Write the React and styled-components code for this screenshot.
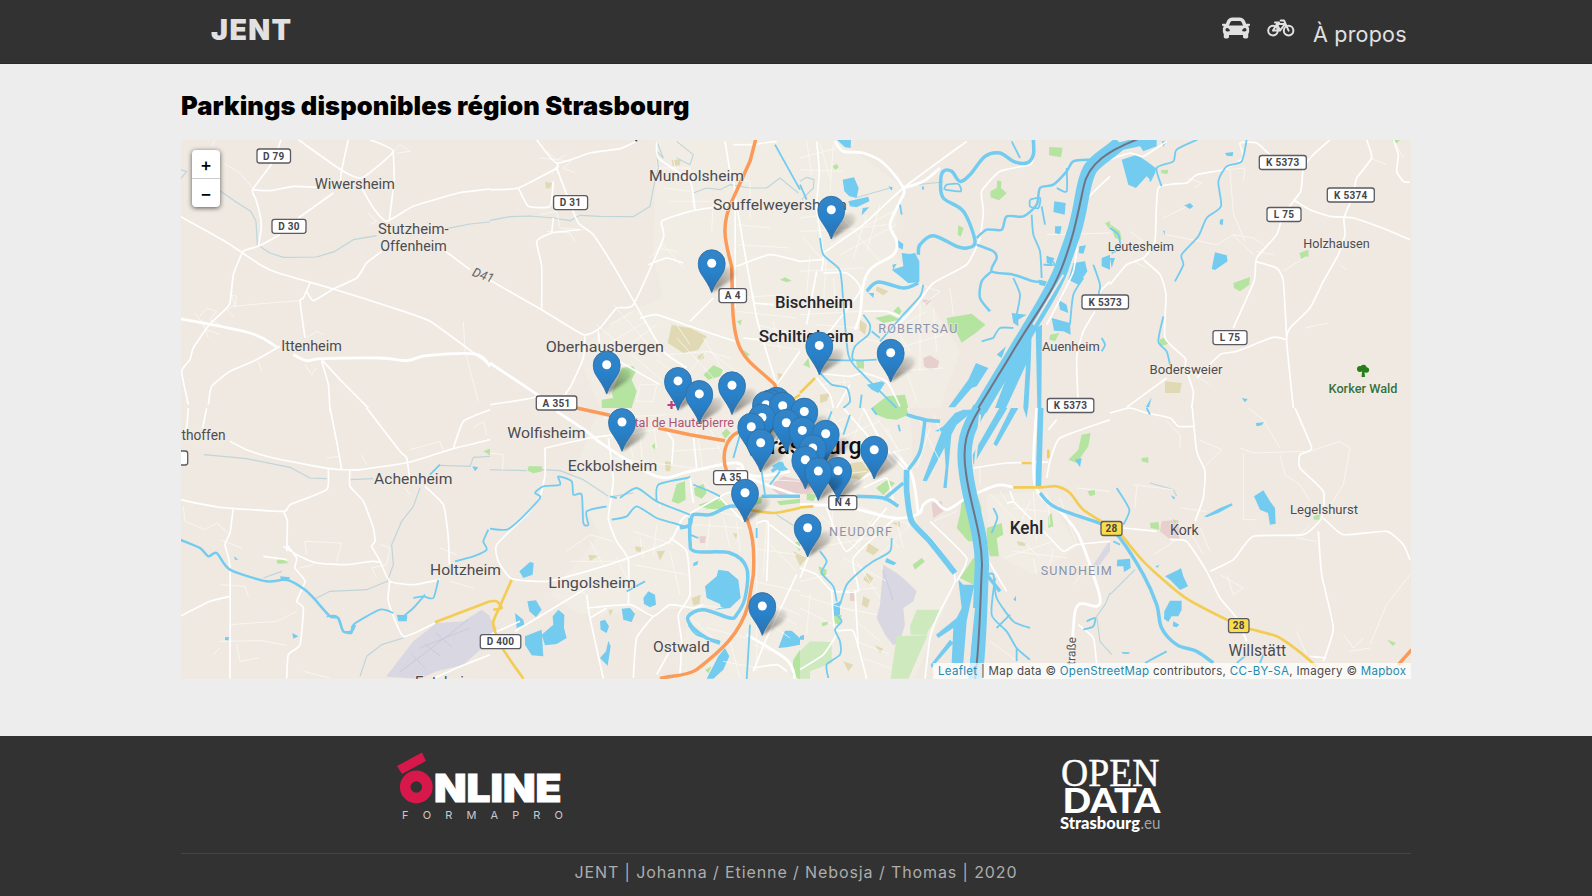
import React from "react";
import styled, { createGlobalStyle } from "styled-components";
import { FaCar } from "react-icons/fa";

const GlobalStyle = createGlobalStyle`
  * { box-sizing: border-box; }
  html, body { margin: 0; padding: 0; }
  body {
    background: #ededed;
    font-family: Inter, "Liberation Sans", sans-serif;
    color: #000;
    overflow: hidden;
  }
  a { color: inherit; text-decoration: none; }
`;

const Page = styled.div`
  width: 100%;
  height: 896px;
  display: flex;
  flex-direction: column;
`;

const Navbar = styled.header`
  height: 64px;
  flex: none;
  background: #323232;
  border-bottom: 1px solid #292929;
  color: #e1e1e1;
  padding: 0 185px 0 211px;
  display: flex;
  justify-content: space-between;
`;

const Brand = styled.a`
  font-size: 28.5px;
  line-height: 34px;
  margin-top: 13px;
  font-weight: 900;
  letter-spacing: 1.4px;
`;

const Nav = styled.nav`
  display: flex;
  align-items: flex-start;
`;

const NavIcon = styled.a`
  display: block;
  height: 28px;
  margin-top: ${(p) => p.$top}px;
  margin-right: ${(p) => p.$gap}px;
  svg { display: block; }
`;

const NavText = styled.a`
  font-size: 21.5px;
  line-height: 26px;
  letter-spacing: 0.2px;
  margin-top: 21px;
  width: 94px;
  white-space: nowrap;
`;

const Main = styled.main`
  width: 1230px;
  margin: 0 auto;
  flex: 1;
`;

const Title = styled.h1`
  margin: 26px 0 18px;
  height: 32px;
  font-size: 25.5px;
  line-height: 32px;
  font-weight: 900;
  letter-spacing: 0.1px;
  white-space: nowrap;
`;

const MapBox = styled.section`
  position: relative;
  height: 539px;
  overflow: hidden;
  background: #efe9e1;
`;

const MapSvg = styled.svg`
  display: block;
  width: 1230px;
  height: 539px;
`;

const ZoomControl = styled.div`
  position: absolute;
  left: 11px;
  top: 10px;
  width: 28px;
  border-radius: 4px;
  background: #fff;
  box-shadow: 0 1px 5px rgba(0, 0, 0, 0.65);
`;

const ZoomButton = styled.button`
  display: flex;
  align-items: center;
  justify-content: center;
  width: 28px;
  height: 28px;
  padding: 1px 0 0;
  border: 0;
  background: none;
  font: 500 18px/28px Inter, sans-serif;
  color: #000;
  & + & { border-top: 1px solid #ccc; height: 29px; }
`;

const Attribution = styled.div`
  position: absolute;
  right: 0;
  bottom: 0;
  width: 478px;
  height: 16px;
  padding-left: 5px;
  background: rgba(255, 255, 255, 0.7);
  font-size: 11.5px;
  line-height: 16px;
  letter-spacing: 0.3px;
  white-space: nowrap;
  color: #4a4a4a;
  a { color: #2489b2; }
`;

const Footer = styled.footer`
  height: 160px;
  flex: none;
  background: #323232;
`;

const FooterInner = styled.div`
  width: 1230px;
  margin: 0 auto;
`;

const Partners = styled.div`
  height: 118px;
  display: grid;
  grid-template-columns: 1fr 1fr;
  justify-items: center;
  border-bottom: 1px solid #454545;
`;

const PartnerLogo = styled.svg`
  display: block;
  margin-top: ${(p) => p.$top}px;
  margin-left: ${(p) => p.$shift}px;
  overflow: visible;
`;

const Credits = styled.p`
  margin: 8px 0 0;
  text-align: center;
  font-size: 16px;
  line-height: 20px;
  letter-spacing: 0.9px;
  color: #adadad;
`;

/* Map sheets: each one holds geometry in third-of-a-pixel units from its own origin. */
const SHEETS = {
  A: [180, 138], B: [490, 138], C: [800, 138], D: [1110, 138],
  E: [180, 408], F: [490, 408], G: [800, 408], H: [1110, 408],
};

const LAYERS = [
  { fill: "#f1ede4", paths: [
    ["B", "M500 0H930V810H330L260 640L420 520L520 480L490 350Z"],
    ["C", "M0 0H110L300 140L280 340L360 440L480 640L420 810H0Z"],
    ["F", "M330 0H930V820H560L600 600L270 620L180 560L330 380L240 220Z"],
    ["G", "M0 0H330L350 340L470 520L340 820H0Z"],
    ["G", "M560 260L740 250L830 420L700 500L570 430Z"],
  ]},
  { fill: "#d9d8e2", paths: [
    ["E", "M618 806L700 700L770 645L850 640L905 605L930 625V700L850 770L770 790L720 812Z"],
    ["F", "M0 630L20 660L0 700Z"],
    ["G", "M250 470L290 495L320 520L350 550L340 580L310 600L315 650L300 700L280 712L255 680L230 630L240 590Z"],
    ["G", "M880 470L930 395V430L895 475Z"],
  ]},
  { fill: "#e0d9b4", paths: [
    ["B", "M545 560L600 570L650 595L625 635L580 645L533 615Z"],
    ["B", "M545 65L572 65L570 82L548 84ZM165 132L187 135L180 150L168 152ZM622 655L640 645L642 660L628 668ZM862 705L878 708L868 738Z"],
    ["C", "M230 445L265 460L250 472L228 458ZM180 545L200 560L195 590L178 575ZM60 770L90 765L80 790L60 795Z"],
    ["F", "M295 440L325 443L300 460ZM435 415L460 418L450 432L438 430ZM525 160L545 162L540 190L527 190ZM500 430L525 428L510 458ZM605 570L632 560L628 590L610 592ZM728 375L742 378L738 392ZM355 605L370 605L360 625ZM910 430L930 440V475Z"],
    ["G", "M130 170L190 160L210 185L180 215L130 205ZM205 405L238 425L220 442L198 430ZM200 495L220 510L210 528L190 515ZM190 565L210 575L202 600L185 590ZM130 760L160 770L145 790ZM225 712L250 722L240 735ZM650 400L678 404L675 415L655 412ZM0 440L20 450L0 475ZM275 345L300 340L300 358Z"],
    ["D", "M165 730L215 735L210 765L165 765Z"],
  ]},
  { fill: "#e7cfcd", paths: [
    ["C", "M370 660L390 652L418 670L412 690L390 695L372 685ZM365 485L395 485L380 502Z"],
    ["F", "M850 225L880 205L930 215V255L870 262L848 245ZM628 385L648 385L645 405L630 405Z"],
    ["G", "M0 210L60 220L60 255L0 258ZM395 285L425 280L430 310L400 330ZM150 550L168 550L165 580L150 578Z"],
    ["H", "M155 340L205 335L208 392L175 390L150 370Z"],
  ]},
  { fill: "#b5e3a0", paths: [
    ["B", "M395 690L430 685L438 700L425 725L440 760L425 810H335V785L370 780L365 765ZM640 710L670 682L700 695L690 715L655 725ZM870 425L885 418L905 428L890 433ZM740 550L755 545L752 562ZM760 635L780 650L770 655Z"],
    ["C", "M748 27L788 29L783 58L747 52ZM571 160L590 150L592 127L604 130L603 150L620 165L597 187L572 178ZM475 262L491 270L482 296L473 290ZM98 85L110 78L116 88L106 96ZM440 540L515 527L556 560L530 583L485 614L470 585L448 580ZM225 540L270 530L300 545L250 555ZM280 520L295 505L305 520L298 530ZM168 668L192 665L192 692L172 690ZM215 810L260 775L315 770L325 810ZM750 590L778 585L765 610L748 605ZM915 255L930 250V275ZM10 680L25 660L30 690Z"],
    ["D", "M152 97L175 95L172 108L155 106ZM370 435L420 417L418 440L390 460L372 450ZM568 345L595 335L596 355L574 364ZM148 605L165 598L174 618L152 625ZM0 258L30 280L35 305L15 300ZM845 5L870 5L862 15L850 13Z"],
    ["E", "M288 460L305 450L326 465L295 468ZM910 130L930 122V142Z"],
    ["F", "M115 175L155 175L157 190L130 196L113 188ZM545 280L560 228L585 220L587 275L565 287ZM612 240L640 228L650 255L635 272L615 262ZM625 290L690 270L720 300L650 305ZM695 75L710 62L722 75L705 92ZM760 280L815 265V285L770 300ZM860 280L930 272V285L870 292ZM910 405L930 400V430ZM645 785L665 775L655 796ZM910 755L930 725V815L905 800ZM485 115L495 105L495 125Z"],
    ["G", "M215 0L320 0L325 20L290 35L260 32L225 18ZM228 240L262 215L285 225L250 262ZM20 255L50 260L40 280L20 275ZM485 280L535 270L545 300L540 400L505 400L470 360L480 320ZM560 360L605 345L610 380L590 390L597 445L570 445L560 400ZM480 510L520 450L545 455V500L520 530ZM338 470L365 450L375 460L345 485ZM845 80L872 75L865 115L830 165L805 155L835 125ZM862 250L885 245L885 260L870 265ZM100 625L125 620L120 650L102 645ZM65 645L85 640L82 650L67 655ZM55 475L80 485L78 505L62 500ZM745 325L755 315L760 355L745 360Z"],
    ["H", "M120 345L145 342L148 365L122 360ZM95 150L115 148L115 165L95 160ZM832 695L858 705L848 714ZM610 325L630 318L628 335L612 335ZM187 333L200 338L195 345Z"],
  ]},
  { fill: "#cee9bd", paths: [
    ["G", "M0 730L30 700L95 702V765L30 790V812H0ZM350 605L425 605L385 668L380 680L332 680L330 655ZM290 685L383 682L325 812H272Z"],
  ]},
  { fill: "#73ccf0", paths: [
    ["C", "M110 5L153 5L152 30L135 28ZM128 125L162 118L176 150L170 180L148 175L133 160ZM145 190L205 176L208 190L170 208L150 205ZM305 345L330 348L345 345L358 370V432L325 436L300 415L275 395L310 385ZM292 305L310 318L308 335L290 325ZM763 190L797 195L794 230L760 222ZM765 265L785 265L780 290L765 285ZM838 325L858 322L850 347L836 345ZM820 375L855 370L862 400L835 440L805 425ZM528 675L565 690L530 745L515 750L465 808H445L505 725ZM775 485L800 500L805 525L780 515ZM755 540L810 555L812 590L790 580L762 578ZM635 525L680 530L655 545L655 565L640 555ZM740 355L763 360L755 380L740 375ZM716 425L740 430L735 445L718 440ZM905 360L930 350V395L905 385ZM265 145L278 148L275 158ZM188 210L208 208L185 232ZM205 465L222 465L220 480ZM200 740L245 730L255 735L235 765L215 755ZM590 650L618 625L605 660ZM277 380L290 377L280 395Z"],
    ["C", "M665 600L695 580L692 680L685 810H670L678 680L618 810H585ZM640 640L650 640L555 810H530ZM707 570L726 560L724 810H712Z"],
    ["D", "M0 20L60 5H140V25L100 40L90 25L40 35L0 55ZM35 65L80 50L110 70L140 92L120 125L110 115L78 150L55 140ZM305 393L315 343L350 352L353 370L315 396ZM222 203L240 195L250 205L240 213ZM330 245L340 243L338 262L329 258ZM345 45L370 42L368 55L350 53ZM395 780L413 783L405 793ZM0 360L15 360L5 390ZM155 10L170 10L160 26ZM160 278L165 278L163 292ZM107 808L125 778L117 808Z"],
    ["E", "M300 505L330 508L325 520L305 518ZM650 620L682 622L680 640L655 640ZM877 175L895 178L885 190ZM337 675L355 685L340 692ZM135 688L147 687L145 698L135 696ZM162 445L175 455L165 455Z"],
    ["F", "M88 490L120 462L131 465L128 500L100 510ZM75 615L100 635L103 650L80 660ZM112 580L138 577L155 605L138 628L118 610ZM105 685L155 665L160 745L125 742L105 710ZM155 680L190 650L188 625L205 605L223 620L222 660L230 690L200 708L165 712ZM395 602L420 600L435 618L425 642L400 635ZM460 570L475 550L495 560L498 590L480 598L462 588ZM330 640L345 635L357 655L350 675L332 665ZM355 698L362 715L353 773L330 750L348 730ZM645 535L680 505L685 485L715 490L745 515L752 570L720 600L675 605L693 598L690 588L650 570ZM610 465L625 458L622 470L610 475ZM865 720L885 668L905 668L930 690V710L890 718ZM685 745L705 720L718 745L700 785L670 812H650ZM845 175L870 160L895 185L870 190Z"],
    ["G", "M430 55L465 15L490 5H525L470 50L380 220L368 218L425 70L405 70ZM432 95L455 70L440 240H430L437 175ZM598 0H622L520 170L518 140ZM633 0H655L590 115L580 108ZM670 0H684L680 30ZM475 515L490 530L523 530L500 640L490 765H455L460 660L415 690L408 680L470 630L485 600ZM460 705L395 780L392 770L450 695ZM260 450L290 465L280 472L255 462ZM98 590L120 580L120 620L100 625ZM0 685L12 680V695H0ZM825 155L845 150L840 178ZM640 575L648 563L648 580Z"],
    ["H", "M432 265L460 247L480 280L495 300L497 347L480 350L474 315L450 305ZM283 325L330 300L365 286L368 292L325 315L290 328ZM165 505L205 485L213 480L220 505L234 535L210 546L180 515ZM163 610L180 578L215 578L215 605L205 625L185 625L175 642L162 632ZM190 640L208 650L200 658L188 655ZM22 455L60 452L62 480L42 492L40 475L20 475ZM437 45L462 43L455 52L440 55ZM182 262L195 268L192 275ZM35 732L60 733L55 738L38 737ZM137 475L148 470L142 480Z"],
  ]},
];

const LINES = [
  { c: "#bed5da", w: 3.5, paths: [
    ["A", "M0 95L20 100L0 125M122 160L165 190L212 220L228 250L232 320L270 345L310 358L410 357L465 340L520 305L590 293M800 272L870 258L930 252"],
    ["B", "M0 247L60 236L120 234L190 240L240 248L270 232L330 235L430 236L480 205L490 150L505 90L500 40L520 60L500 10M610 165L650 150L690 155L720 140L780 150L830 150L870 120L925 165M560 10L610 50L600 80L560 60"],
    ["C", "M0 130L20 118L42 125L40 150L5 185M165 180L270 150M350 140L430 132"],
    ["E", "M72 140L200 152L330 178L390 210L440 212M510 215L580 212M720 240L700 295L665 340L635 410L640 470L622 520L560 545L450 550L400 575M780 172L870 175L880 148L930 145M540 805L560 745L605 710L670 690M250 510L305 490"],
    ["F", "M0 185L110 188M155 185L210 188L280 215L355 265M370 265L430 255M860 320L930 365"],
    ["G", "M930 555L915 590L890 625L900 700L935 740"],
    ["H", "M75 485L0 560M120 225L190 245L200 265"],
  ]},
  { c: "#fbf9f6", w: 3, o: 0.75, paths: [
    ["A", "M95 25L105 5M130 75L180 105L218 150M150 460L165 500L140 515L165 540M160 505L235 498L355 488M60 535L80 510L110 520L90 545L120 560M150 470L170 475L165 510M65 545L85 600M380 600L410 580L430 590M375 680L395 710L410 690M640 40L660 20L690 40L650 45M850 550L855 640L895 790M565 225L590 250L570 260M235 670L245 700M45 525L80 575L120 590"],
    ["B", "M150 60L245 70L220 90L255 105M170 40L200 65L230 50M185 110L205 75M150 230L200 220L210 270L280 275M170 280L240 285L255 310M480 360L520 320L580 390M500 330L560 340M505 90L600 90L610 210M540 190L670 190L665 280M720 120L780 130L780 240M560 120L550 60M520 150L600 160M740 260L840 270M745 320L900 330M740 480L880 470M790 460L800 550M740 520L920 540M830 620L930 635M850 550L870 640M320 560L520 730M370 500L510 660M360 560L430 520M350 620L470 550M390 640L500 560M530 650L660 640L750 710M600 700L650 640L720 660M560 600L670 720M450 740L500 740L490 790L440 790ZM350 690L420 680M500 665L570 720M640 600L720 730M560 560L600 620M800 560L920 590M770 670L830 720M810 620L860 600"],
    ["C", "M0 60L110 30M0 95L130 100M20 10L35 110M60 15L90 120M100 20L90 160M0 240L80 230M0 280L140 275M10 300L80 380M100 280L260 260M130 240L240 370M90 320L280 220M120 350L290 260M160 360L200 230M200 340L240 200M0 400L190 390M30 350L20 470M80 350L70 500M0 530L180 520M100 420L110 520M50 560L180 570M180 600L280 620M240 600L380 520M260 640L430 590M280 560L330 640M360 500L360 700M400 510L410 640M270 700L430 690M130 720L150 800M60 740L150 730M320 700L350 790M360 440L420 460L370 500M740 290L930 285M450 450L460 530"],
    ["D", "M235 120L275 135L255 150M360 95L370 225L405 310M160 240L230 205M170 290L320 320L370 290L430 300L460 320M370 290L430 350M440 340L490 350M585 570L655 555M590 355L520 400M70 370L110 390M60 280L100 310L70 320M780 60L830 80M690 380L710 395M850 5L880 60M220 690L300 740M350 95L405 90L400 130"],
    ["E", "M10 295L15 340L75 365L110 345L150 380M120 395L185 420M380 440L375 400L485 405L470 460M120 530L195 535L205 565M150 650L290 640L350 610M120 700L245 698L320 712M170 710L180 760L235 750M100 740L120 720M360 480L400 470M370 790L450 810M600 410L630 420L620 470L575 480L590 510M545 140L560 170M440 150L480 145M880 60L910 40L920 80M780 420L830 440M810 520L880 540M690 125L780 100L790 130M675 240L690 260"],
    ["F", "M0 135L40 140L38 185M340 30L530 20M360 90L520 60M410 90L430 10M490 40L500 120M450 80L460 180M540 130L690 120M620 70L640 190M660 60L700 150M370 150L690 190M500 230L510 300M430 150L410 60M640 220L690 280M640 300L760 330M610 350L760 360M660 330L650 420M700 330L720 420M740 340L750 430M230 430L300 380L370 400M240 460L420 460M300 400L340 470M380 450L420 530M430 370L550 410M450 390L460 450M500 350L490 440M540 430L570 560M430 470L590 500M200 520L290 560M620 590L700 600M590 620L680 700M650 660L770 690M720 700L750 810M800 320L800 790M830 340L820 500M780 420L920 440M830 400L920 490M790 520L930 550M800 590L920 650M830 640L900 690M850 590L930 620M790 710L880 740M700 760L800 780M850 20L930 140M860 120L930 170M750 210L930 220"],
    ["G", "M0 80L140 30M80 0L200 180M120 90L240 40M150 100L220 170M190 0L160 100M230 30L300 130M260 60L320 180M180 160L330 120M30 210L200 190M100 300L90 400M160 290L330 350M60 320L180 430M230 310L170 420M200 340L300 420M290 340L310 420M330 350L240 440M40 420L210 390M0 520L90 500M0 560L160 610M0 600L100 650M30 560L20 680M130 450L260 520M170 460L240 570M120 550L230 540M130 600L230 620M170 640L240 700M170 700L270 740M190 750L270 780M400 340L470 310M350 20L420 160M400 20L420 70M350 180L390 60M540 180L540 230M570 260L650 340M600 250L620 280M640 300L740 310M660 350L690 280M700 250L710 400M740 260L750 350M780 270L830 410M640 430L800 450M670 400L720 450M610 450L760 400M800 480L870 470L820 530M560 590L600 660M570 700L680 780M700 450L710 500M760 420L750 470M830 240L930 250"],
    ["H", "M70 230L190 245M80 235L75 300M265 95L335 125L280 180M390 120L430 135L600 130L690 100L720 120L700 230L650 310M400 135L400 335L440 335M510 140L525 200L570 230L600 280M415 0L460 35L510 120M170 40L210 80L210 120M240 370L280 440M270 360L300 430M210 300L290 310M330 500L400 540L370 560L350 500M600 350L560 390L620 400M780 710L830 590L900 500M700 680L730 720L760 690M720 730L780 720M560 670L590 740M130 440L200 395"],
  ]},
  { c: "#fff", w: 5, smooth: 0.5, paths: [
    ["A", "M303 5L280 70L218 155L228 185L240 230L244 270L235 325M218 155L270 158L340 145L415 148M355 5L485 97L545 120L640 40L570 5M505 5L485 97L480 140M640 40L642 130L628 245M545 150L580 210L620 250L700 205L835 165L870 160L930 153M460 165L355 240M300 290L235 325L190 340L160 410L148 500L88 560L40 630L30 665L5 700L25 800M0 235L135 310L240 380L295 405L460 453L640 510L750 550L885 648L930 680M390 435L370 480L360 490L375 600M380 460L400 488L460 453L530 420L560 375L605 340M790 335L870 395M85 800L95 745L150 700L220 670L300 625M425 670L445 740L450 820M425 665L490 735L565 810"],
    ["B", "M140 5L200 75L300 45L390 32L440 10M200 75L200 90L85 150L0 155M85 150L115 205L180 205L190 130M200 90L230 170L265 255L310 290L380 400L460 540L520 640L590 690M0 427L155 515L280 590L330 570L380 510L430 500L520 300L515 250L600 220L720 200M155 515L155 385L140 310L185 285L270 275M185 285L190 240M500 10L505 60L600 130L615 215M450 540L500 530L600 565L735 610M600 550L670 480M475 380L530 360L580 375M740 385L840 350L930 370M0 675L140 770L100 785L0 800M285 595L280 660L245 740L225 770M325 580L340 640L510 740M705 10L720 100L735 160L735 510M735 170L750 260L800 540L860 740M730 20L780 20L860 10M760 600L850 610M790 495L850 500M860 740L930 640"],
    ["C", "M50 10L58 100L50 210L70 350L65 400M0 370L65 365M70 345L190 260L310 150L500 10M700 60L690 80L600 100L545 160L550 220L540 300L500 380L400 435L350 500L310 545L285 565M190 520L260 520L310 540M20 560L50 400M40 640L180 460L140 405L70 405M885 520L850 580L830 660L835 810M880 480L930 430M930 115L850 200L820 400L740 560M50 705L150 715L190 705L260 730L300 805M50 720L90 770L100 810M150 740L110 810"],
    ["D", "M660 5L610 50L580 90L572 160L520 230L500 290L440 360L432 430L370 570M550 185L600 215L660 235L730 240L830 275L900 305M770 5L785 60L740 120L730 170L702 240L705 290L685 350L640 430L600 510L540 570L530 610L550 810M850 5L865 50L860 100L880 130L900 133M435 370L500 390L520 430L530 600M530 605L490 598L380 640L330 650L260 720M0 440L50 380L100 360L135 310L145 150L230 135L260 110L340 95L400 60L390 15L440 15L490 60M100 365L150 410L168 470L165 600L225 660L225 690M0 65L60 45L100 55L170 10M50 808L170 720M230 700L250 760L245 810"],
    ["E", "M80 0L68 60M25 0L20 60L10 70M150 100L200 125L280 150L450 182L540 185L690 162L820 122L930 95M820 122L850 40L930 5M450 0L470 100L485 185M445 185L440 245L330 290L310 310L120 298L0 275M510 185L510 235L550 280L580 360L585 400L575 415L600 460L575 460L500 470L410 465L350 440L310 415M310 310L322 340L320 430M560 0L660 130L680 150L690 220M735 235L790 290L805 390L808 470M320 410L350 450L345 480L375 520L350 580L370 600L360 710L325 740L320 812M160 300L150 375L135 410L150 480L150 812M0 625L90 580L150 565M600 460L630 520L700 530L780 515M630 520L625 580L670 685L765 645M250 445L320 455M760 812L830 780L930 740"],
    ["F", "M165 120L300 90L420 75M165 120L165 200L150 265L110 320L20 410L25 460L65 512L170 520L290 490L415 450L540 400L580 330L700 260L730 250M355 90L370 220L355 330L380 400L415 455L415 590M540 390L590 430L600 560L565 620L575 700L570 800M290 560L300 630L340 812M290 600L420 590L490 625L540 590L610 600L640 590M300 630L350 600M75 670L290 540M0 680L90 640M490 625L440 690L430 810M500 800L550 710M530 70L550 100L545 170M610 80L620 180M600 210L610 285M690 270L760 340M800 345L835 345L830 520M840 350L930 420M920 500L830 690L790 790M790 780L860 770L890 790"],
    ["G", "M0 510L60 360M80 300L140 430L260 300M0 480L50 500L95 548L175 548L160 450L280 335M95 548L105 665L160 670L200 812M165 548L175 720M0 785L70 740L110 680M335 340L400 400L450 470L465 520L415 620L390 690L375 812M390 340L500 450L470 520M630 250L640 280L620 285M520 180L620 165L745 162M740 210L750 160L780 90L930 35M745 65L770 35M640 280L750 390L790 430L830 410L930 400M835 650L880 690L890 770M560 450L620 550M190 0L250 110L320 190M130 0L280 170M280 280L260 210L190 240M220 190L160 230"],
    ["H", "M0 15L60 0L110 15L180 30L205 55L250 55M247 0L260 130L285 190L280 270L255 340M555 0L605 120L570 140L570 180L640 250L635 330L580 380L430 385L370 455L300 490M640 330L700 380L830 370L880 410L900 455M40 360L140 370M180 395L230 400L290 490L330 570L380 630L410 700M625 370L635 500L670 660L640 760M650 750L600 745"],
  ]},
  { c: "#fff", w: 8.5, smooth: 1, paths: [
    ["A", "M0 542L210 585L295 630M340 650L380 668L425 662L600 660L680 668L740 653L885 648L930 685"],
    ["B", "M0 675L150 775"],
    ["C", "M105 10L130 40L190 45L250 75L310 150L300 190L270 260L290 310L280 350L215 390L190 440L180 530L165 575M310 150L370 130L420 90"],
    ["F", "M200 10L290 70L340 110L500 205L600 190L740 165L780 210L930 265M770 680L890 755L915 812M740 180L800 205L900 190"],
    ["G", "M0 290L130 295L280 330L355 318L370 290L400 275L440 305L500 270L590 232L640 238M280 130L335 200L355 320M710 0L705 230L790 320L835 380L880 500L900 570L890 595L835 590L820 660L815 812"],
  ]},
  { c: "#73ccf0", w: 5.5, smooth: 0.7, paths: [
    ["B", "M855 20L930 155"],
    ["C", "M60 300L70 350L115 390L125 430L145 650L190 710L240 760L290 810M190 530L210 560L205 590L165 625L160 665L230 665M60 665L160 668M215 580L240 600M0 140L20 185M800 90L800 160L770 150M695 230L700 290L720 340L725 420M725 205L735 260M640 420L660 470L650 530M580 600L545 610M640 570L600 570L580 600M300 200L305 230M368 145L370 155M60 705L95 740L140 750L150 790L130 810M690 185L720 180L715 210L690 205L690 185M635 10L660 60M880 380L900 440L895 470M185 770L180 810M905 600L915 620L905 640M370 440L360 475L310 530L240 610M810 560L820 470L850 420M740 355L765 380L730 380M432 155L440 140L475 138L482 160L435 155"],
    ["D", "M262 5L200 35L190 70L140 90L155 145M135 100L120 130M410 5L395 70L350 85L325 130L333 205L290 240L265 295L215 350L220 380L195 430M160 535L145 610L170 640L180 680M0 270L25 290L30 330L5 345"],
    ["E", "M825 460L880 445L920 425L910 400L925 365M775 515L760 570L730 565L700 570M735 560L700 600L670 625M640 615L600 605L520 650L515 675L490 670L470 625L440 625M750 200L780 170"],
    ["F", "M0 362L50 365L90 335L150 270L135 255L160 235L210 230L205 205L245 220L250 260L275 260L280 345L295 350L290 310L350 295M360 265L380 270M365 335L410 325L440 295L500 330L550 345L600 360M390 270L440 240L500 280L600 320M500 280L505 230L590 210L600 205M600 380L625 390M610 230L660 250L690 265M410 550L465 520M800 360L800 390M780 650L770 815M870 80L830 150M815 190L825 260M870 190L840 230M595 650L620 680L690 700M730 150L750 80"],
    ["G", "M60 430L80 460L65 495L100 535L110 580M110 620L125 640L105 665L120 700L120 740L80 770L85 810M275 390L270 430L220 460L180 490L140 530L120 590M150 20L130 80M95 10L80 50M300 70L295 50M580 300L592 330L575 375M560 500L580 500L590 570L640 640L690 660M585 510L575 620L620 670L650 720L690 755M650 720L650 760M590 660L630 620M860 640L885 630L880 655L850 665M215 0L230 20"],
    ["H", "M110 0L120 20M20 240L58 305L40 350M105 765L170 730M10 400L30 410M380 765L410 740M450 765L460 740"],
  ]},
  { c: "#73ccf0", w: 10.5, smooth: 1, paths: [
    ["C", "M700 5L700 50L680 75L640 70L600 45L555 55L510 110L480 130L455 100L430 100L422 130L430 180L490 220L525 310L500 330L470 325L400 293L360 320L355 350M200 460L235 432L310 450L355 435"],
    ["F", "M600 330L600 400L615 430L720 435L770 480L765 570L740 620L720 630L640 605L595 625L605 655L650 690L690 705M570 360L600 350L610 320L660 320L720 295L770 300M815 265L930 265M845 190L880 165"],
    ["G", "M320 20L375 35L420 40M375 35L360 130L325 185M170 265L250 270L295 295M250 275L310 225M720 255L770 300L930 355M560 500L600 550"],
    ["H", "M0 365L30 390L100 500L140 590L155 660L200 710L260 730L310 765"],
  ]},
  { c: "#73ccf0", w: 7.5, smooth: 0.8, paths: [
    ["C", "M530 300L560 275L605 275L620 235L670 235L710 200L720 150L760 140L800 100L820 70L870 65M530 320L580 340L590 360L575 400L640 410L700 430L725 430M575 400L545 430L540 480L570 520"],
    ["E", "M0 395L60 420L85 445L110 435L150 485L260 520L320 515L375 545L405 575L450 625L475 630L490 670L515 670L525 650"],
  ]},
  { c: "#73ccf0", w: 17, smooth: 0.6, paths: [
    ["G", "M320 185L320 250L335 340L390 400L465 495M722 0L715 240"],
  ]},
  { c: "#73ccf0", w: 43, paths: [
    ["C", "M960 15C930 45 895 60 872 90C850 125 845 195 832 245C820 300 800 340 785 390C760 460 680 580 540 815"],
    ["G", "M540 0C500 65 485 110 498 195C510 290 545 370 546 470C540 590 540 700 525 825"],
  ]},
  { c: "#efe9e1", w: 6, paths: [["G", "M522 600L505 770M540 20L525 170"], ["C", "M790 410L700 560"]] },
  { c: "#717384", w: 6, paths: [
    ["C", "M1012 4C930 36 862 75 850 150C832 235 820 300 785 390C750 480 690 550 630 655L535 810"],
    ["G", "M540 0C500 65 485 110 498 195C510 290 545 370 546 470C540 590 540 700 525 815"],
  ]},
  { c: "#f2cc54", w: 8, smooth: 0.8, paths: [
    ["C", "M0 765L45 720"],
    ["E", "M765 643L930 580"],
    ["F", "M65 515L30 595L10 640L15 670L40 725L100 812M0 580L20 580L35 600L10 605M775 305L850 315L930 300"],
    ["G", "M0 298L40 295M640 238L720 238L770 235L810 255L850 305L930 355M665 165L695 165M745 125L745 150"],
    ["H", "M30 375L100 460L220 565L350 635L410 660L500 685L560 725L620 775"],
    ["B", "M930 770L900 790"],
  ]},
  { c: "#fb9b59", w: 10.5, paths: [
    ["B", "M797 5L780 70L730 180C690 260 705 310 725 385L728 510C735 660 770 660 855 740L857 770"],
    ["F", "M260 0L360 22M505 60L600 80L705 98M750 70C700 90 695 150 710 190M770 330C785 370 795 410 790 500L775 590C750 680 690 730 620 785C590 805 540 803 510 812"],
    ["H", "M865 770L905 725"],
  ]},
];

/* [text, left, baseline, width, size, colour, weight] */
const LABELS = [
  ["Wiwersheim", 314.7, 189, 80.3, 15], ["Stutzheim-", 378, 233.9, 70.7, 15], ["Offenheim", 380.3, 250.7, 66.4, 15],
  ["Ittenheim", 281.3, 351.2, 60.5, 15], ["Mundolsheim", 649, 180.5, 95, 15.4], ["Souffelweyersheim", 713, 209.6, 133.7, 15.4],
  ["Oberhausbergen", 545.7, 351.5, 118.3, 15.4], ["Bischheim", 775, 308.4, 78, 16.6, "#24262b", 500],
  ["Schiltigheim", 758.7, 342.2, 95.3, 16.6, "#24262b", 500], ["ROBERTSAU", 878.3, 332.6, 79, 12.6, "#8d92ab"],
  ["Auenheim", 1042, 350.5, 57.7, 13.7], ["Leutesheim", 1107.7, 251, 66.3, 13.7], ["Bodersweier", 1149.5, 374.3, 73, 13.7],
  ["Holzhausen", 1303.3, 248, 66.4, 13.7], ["Korker Wald", 1328.5, 393, 69, 13.7, "#39713e", 500],
  ["thoffen", 181.5, 440, 44, 15], ["Achenheim", 374, 483.7, 78.4, 15.4], ["Holtzheim", 430, 575.4, 71, 15.4],
  ["Entzheim", 415, 687, 62, 15], ["Wolfisheim", 507.3, 437.7, 78.3, 15.4], ["Eckbolsheim", 567.7, 470.5, 89.6, 15.4],
  ["tal de Hautepierre", 634.5, 426.6, 99.5, 12.8, "#ae5479"], ["Lingolsheim", 548.3, 587.6, 87.7, 15.4], ["Ostwald", 653, 651.5, 56.7, 15.4],
  ["Strasbourg", 748, 453.5, 113.5, 23, "#101012", 500], ["NEUDORF", 829, 535.7, 63, 12.6, "#8d92ab"],
  ["Kehl", 1009.7, 534, 33.6, 18, "#24262b", 500], ["SUNDHEIM", 1040.7, 574.8, 71, 12.6, "#8d92ab"],
  ["Kork", 1170, 534.6, 28.7, 14.8], ["Legelshurst", 1290, 514.2, 68, 13.7], ["Willstätt", 1228.5, 656, 57.7, 16],
];

/* [text, x, y, width, fill] */
const SHIELDS = [
  ["D 79", 257, 149, 33.5], ["D 30", 272, 219.3, 34], ["D 31", 553.6, 195.6, 34], ["A 4", 719, 288.6, 27.5],
  ["A 351", 536.3, 396, 40.5], ["K 5373", 1259.3, 155.5, 47], ["K 5374", 1327.3, 188, 47], ["L 75", 1267, 207.5, 34],
  ["K 5373", 1082, 295, 46.5], ["L 75", 1213, 330.6, 34], ["K 5373", 1047.3, 398.5, 46.5], ["D 400", 480.3, 634.7, 40.5],
  ["A 35", 713.6, 470.6, 34], ["N 4", 828.8, 495.6, 28], ["28", 1101, 521.5, 21, "#fbdd4a"], ["28", 1228.5, 618.7, 20.5, "#fbdd4a"],
];

const PINS = [
  [711.7, 292.5], [606.7, 394], [678, 410.2], [699.3, 423.2], [732, 414.5], [831.3, 239], [819.3, 374.7], [890.7, 382],
  [622, 451.3], [745, 522], [762.3, 635.3], [807.7, 557], [874.2, 479], [838, 500], [818.3, 500.4], [805.3, 489],
  [812.7, 477.3], [825.7, 463], [802.3, 459.7], [760.7, 472], [751.3, 456], [762, 446.8], [786.3, 452],
  [782.7, 435], [804.3, 440.8], [766, 434], [770.5, 432.5], [776.5, 430],
].sort((a, b) => a[1] - b[1]);

const at = ([x, y]) => `translate(${x} ${y}) scale(.333333)`;

/* Rounds a polyline path into cubic segments (Catmull-Rom); paths with other commands stay as they are. */
function soften(d, amount) {
  if (!amount || /[CHVZ]/.test(d)) return d;
  return d.split("M").filter(Boolean).map((run) => {
    const p = run.split("L").map((pair) => pair.trim().split(" ").map(Number));
    let out = `M${p[0].join(" ")}`;
    for (let i = 0; i < p.length - 1; i += 1) {
      const a = p[i - 1] || p[i];
      const b = p[i];
      const c = p[i + 1];
      const e = p[i + 2] || c;
      const k = amount / 6;
      out += `C${b[0] + (c[0] - a[0]) * k} ${b[1] + (c[1] - a[1]) * k} ${c[0] - (e[0] - b[0]) * k} ${c[1] - (e[1] - b[1]) * k} ${c[0]} ${c[1]}`;
    }
    return out;
  }).join("");
}

function Label({ text, x, y, width, size, fill = "#4c4b4f", weight = 400 }) {
  const caps = text === text.toUpperCase();
  return (
    <text
      x={x} y={y} fontSize={size} fontWeight={weight} fill={fill}
      stroke="#f3eee8" strokeWidth="2" strokeOpacity=".6" paintOrder="stroke"
      textLength={width} lengthAdjust={caps ? "spacing" : "spacingAndGlyphs"}
    >
      {text}
    </text>
  );
}

function Shield({ text, x, y, width, fill = "#fff" }) {
  return (
    <g>
      <rect x={x} y={y} width={width} height="14" rx="2.5" fill={fill} stroke="#5b5a60" strokeWidth="1.3" />
      <text x={x + width / 2} y={y + 10.6} textAnchor="middle" fontSize="10" fontWeight="700" fill="#46454b" letterSpacing=".3">
        {text}
      </text>
    </g>
  );
}

function Pin({ x, y }) {
  return (
    <g transform={`translate(${x} ${y})`}>
      <path d="M0 0L8 -19Q16 -29 23 -24Q27 -19 19 -12Z" fill="url(#pinShadow)" filter="url(#soft)" />
      <path
        d="M0 0C-2.5 -7.5 -7 -13 -11 -19.5C-12.8 -22.5 -13.4 -26 -13.4 -29.3A13.4 13.4 0 0 1 13.4 -29.3C13.4 -26 12.8 -22.5 11 -19.5C7 -13 2.5 -7.5 0 0Z"
        fill="url(#pinFill)" stroke="#2c70a8" strokeWidth=".9"
      />
      <circle cy="-29.3" r="4.5" fill="#fff" />
    </g>
  );
}

function StrasbourgMap() {
  return (
    <MapSvg viewBox="181 140 1230 539" fontFamily="Roboto, 'Liberation Sans', sans-serif">
      <defs>
        <linearGradient id="pinFill" x1="0" y1="0" x2="0" y2="1">
          <stop offset="0" stopColor="#3485c6" />
          <stop offset=".5" stopColor="#2882cb" />
          <stop offset="1" stopColor="#2b71ae" />
        </linearGradient>
        <linearGradient id="pinShadow" gradientUnits="userSpaceOnUse" x1="0" y1="0" x2="25" y2="-25">
          <stop offset="0" stopColor="#000" stopOpacity=".5" />
          <stop offset="1" stopColor="#000" stopOpacity=".04" />
        </linearGradient>
        <filter id="soft" x="-30%" y="-30%" width="160%" height="160%"><feGaussianBlur stdDeviation="1.8" /></filter>
      </defs>
      {LAYERS.map((layer, i) => (
        <g key={i} fill={layer.fill}>
          {layer.paths.map(([s, d], j) => <path key={j} d={d} transform={at(SHEETS[s])} />)}
        </g>
      ))}
      {LINES.map((line, i) => (
        <g key={i} fill="none" stroke={line.c} strokeWidth={line.w} strokeOpacity={line.o} strokeLinejoin="round">
          {line.paths.map(([s, d], j) => <path key={j} d={soften(d, line.smooth)} transform={at(SHEETS[s])} />)}
        </g>
      ))}
      <g fill="none" stroke="#c9cadb" strokeWidth="1">
        <path d="M400 672L468 620M412 655L425 668M425 644L440 656M436 633L452 647M420 648L470 628M883 570L893 600" />
      </g>
      <path d="M671.5 401V409M667.5 405H675.5" stroke="#bd3f7b" strokeWidth="2.2" />
      <g fill="#257f18">
        <circle cx="1360" cy="369" r="3" /><circle cx="1363.5" cy="367.7" r="3" /><circle cx="1366.3" cy="370" r="2.8" />
        <path d="M1362.3 370H1364.3L1365 377H1361.5Z" />
      </g>
      {LABELS.map(([text, x, y, width, size, fill, weight], i) => (
        <Label key={i} {...{ text, x, y, width, size, fill, weight }} />
      ))}
      <text transform="translate(471.5 275.5) rotate(20)" fontSize="12.5" fontStyle="italic" fill="#626166">D41</text>
      <text transform="translate(1075 665) rotate(-88)" fontSize="12" fill="#55545a" textLength="28">traße</text>
      <rect x="150" y="451" width="37.7" height="14" rx="2.5" fill="#fff" stroke="#5b5a60" strokeWidth="1.3" />
      {SHIELDS.map(([text, x, y, width, fill], i) => <Shield key={i} {...{ text, x, y, width, fill }} />)}
      <circle cx="636.3" cy="140.5" r="1.1" fill="#444" />
      {PINS.map(([x, y], i) => <Pin key={i} x={x} y={y} />)}
    </MapSvg>
  );
}

function BikeIcon() {
  return (
    <svg width="28" height="19" viewBox="0 0 28 19" fill="none" stroke="#e1e1e1" strokeWidth="2">
      <circle cx="6" cy="12.6" r="4.8" />
      <circle cx="21.6" cy="12.6" r="4.8" />
      <path d="M6 12.6L10 6H18L13 12.6H6M10 6L13 12.6M21.6 12.6L17 2.5H13.7M8 4.6H12" strokeLinejoin="round" strokeLinecap="round" />
    </svg>
  );
}

function OnlineLogo() {
  return (
    <PartnerLogo width="166" height="70" viewBox="396 752 166 70" $top={16} $shift={-20} fontFamily="Inter, sans-serif">
      <path d="M397 766L422 752.5L426 761L402 774Z" fill="#d8184b" />
      <circle cx="416.3" cy="787" r="11.1" fill="none" stroke="#d8184b" strokeWidth="10.6" />
      <text x="434" y="802" fontSize="39" fontWeight="900" fill="#fff" stroke="#fff" strokeWidth="1" textLength="127.5" lengthAdjust="spacingAndGlyphs">NLINE</text>
      <text x="402" y="819" fontSize="11" fill="#c9c9c9" textLength="161">FORMAPRO</text>
    </PartnerLogo>
  );
}

function OpenDataLogo() {
  return (
    <PartnerLogo width="102" height="78" viewBox="1060 756 102 78" $top={20} $shift={15} fill="#fff">
      <text x="1061" y="785.5" fontFamily="'Liberation Serif', serif" fontSize="39" textLength="98.5" lengthAdjust="spacingAndGlyphs" stroke="#fff" strokeWidth=".4">OPEN</text>
      <text x="1062.5" y="813" fontFamily="Lato, sans-serif" fontSize="33.5" fontWeight="900" textLength="98" lengthAdjust="spacingAndGlyphs">DATA</text>
      <text x="1060" y="828.5" fontFamily="Lato, sans-serif" fontSize="17" fontWeight="900" textLength="80" lengthAdjust="spacingAndGlyphs">Strasbourg</text>
      <text x="1140.5" y="828.5" fontFamily="Lato, sans-serif" fontSize="17" fill="#a2a2a2" textLength="20" lengthAdjust="spacingAndGlyphs">.eu</text>
    </PartnerLogo>
  );
}

export default function App() {
  return (
    <>
      <GlobalStyle />
      <Page>
        <Navbar>
          <Brand href="#">JENT</Brand>
          <Nav>
            <NavIcon href="#" $top={14} $gap={17}><FaCar size={28} /></NavIcon>
            <NavIcon href="#" $top={18} $gap={18}><BikeIcon /></NavIcon>
            <NavText href="#">À propos</NavText>
          </Nav>
        </Navbar>
        <Main>
          <Title>Parkings disponibles région Strasbourg</Title>
          <MapBox>
            <StrasbourgMap />
            <ZoomControl>
              <ZoomButton>+</ZoomButton>
              <ZoomButton>−</ZoomButton>
            </ZoomControl>
            <Attribution>
              <a href="#">Leaflet</a> | Map data © <a href="#">OpenStreetMap</a> contributors, <a href="#">CC-BY-SA</a>, Imagery © <a href="#">Mapbox</a>
            </Attribution>
          </MapBox>
        </Main>
        <Footer>
          <FooterInner>
            <Partners>
              <OnlineLogo />
              <OpenDataLogo />
            </Partners>
            <Credits>JENT | Johanna / Etienne / Nebosja / Thomas | 2020</Credits>
          </FooterInner>
        </Footer>
      </Page>
    </>
  );
}
